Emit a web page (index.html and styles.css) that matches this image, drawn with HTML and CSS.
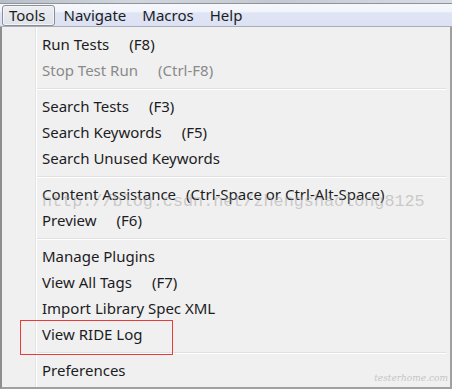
FILE: index.html
```html
<!DOCTYPE html>
<html>
<head>
<meta charset="utf-8">
<link rel="stylesheet" href="styles.css">
</head>
<body>
<div class="screen">
  <div class="topstrip"></div>
  <div class="menubar">
    <span class="mitem active">Tools</span>
    <span class="mitem">Navigate</span>
    <span class="mitem">Macros</span>
    <span class="mitem">Help</span>
  </div>
  <div class="dropdown">
    <div class="row">Run Tests<span class="key">(F8)</span></div>
    <div class="row disabled">Stop Test Run<span class="key">(Ctrl-F8)</span></div>
    <div class="sep"></div>
    <div class="row">Search Tests<span class="key">(F3)</span></div>
    <div class="row">Search Keywords<span class="key">(F5)</span></div>
    <div class="row">Search Unused Keywords</div>
    <div class="sep"></div>
    <div class="row">Content Assistance<span class="key narrow">(Ctrl-Space or Ctrl-Alt-Space)</span></div>
    <div class="row">Preview<span class="key">(F6)</span></div>
    <div class="sep"></div>
    <div class="row">Manage Plugins</div>
    <div class="row">View All Tags<span class="key">(F7)</span></div>
    <div class="row">Import Library Spec XML</div>
    <div class="row">View RIDE Log</div>
    <div class="sep"></div>
    <div class="row">Preferences</div>
  </div>
  <div class="highlight"></div>
  <div class="watermark">http://blog.csdn.net/zhengshaolong8125</div>
  <div class="mark2">testerhome.com</div>
</div>
</body>
</html>
```
FILE: styles.css
```css
* { box-sizing: border-box; }
html, body { margin: 0; padding: 0; }
body {
  width: 452px;
  height: 389px;
  overflow: hidden;
  background: #f0f0f0;
  font-family: "Noto Sans", "Noto Sans CJK SC", sans-serif;
  font-size: 15px;
  color: #1c1c24;
}
.screen {
  position: relative;
  width: 452px;
  height: 389px;
}
.topstrip {
  height: 4px;
  background: linear-gradient(90deg, #b8bec8, #d2d6dc 30%, #c4c9d0 60%, #d8dde3);
  border-bottom: 1px solid #8f949c;
}
.menubar {
  height: 23px;
  display: flex;
  align-items: stretch;
  padding-left: 2px;
  background: linear-gradient(#f6f8fc 0, #f1f4fa 35%, #dfe5f4 40%, #dce2f3 100%);
  border-bottom: 1px solid #a9adb5;
}
.mitem {
  display: flex;
  align-items: center;
  padding: 0 8px 0 8px;
  line-height: 1;
}
.mitem.active {
  border: 1px solid #8a8e96;
  border-radius: 3px;
  background: linear-gradient(#eceef2, #dfe2e8);
  box-shadow: inset 0 0 0 1px #f4f5f7;
  margin-top: 1px;
  padding: 0 8px 0 6px;
  margin-right: 1px;
}
.dropdown {
  height: 362px;
  border-left: 2px solid #8e8e8e;
  border-right: 2px solid #a0a0a0;
  border-bottom: 2px solid #a0a0a0;
  padding-top: 4px;
  background:
    linear-gradient(90deg, transparent 33px, #e2e3e3 33px, #e2e3e3 34px, #ffffff 34px, #ffffff 35px, transparent 35px),
    #f0f0f0;
}
.row {
  height: 26px;
  display: flex;
  align-items: center;
  padding-left: 40px;
  white-space: nowrap;
}
.row.disabled { color: #8a8a8a; }
.key { margin-left: 20px; }
.key.narrow { margin-left: 10px; }
.sep {
  height: 10px;
  margin-left: 35px;
  margin-right: 4px;
  padding-top: 5px;
}
.sep::before {
  content: "";
  display: block;
  border-top: 1px solid #e0e0e0;
  border-bottom: 1px solid #ffffff;
}
.highlight {
  position: absolute;
  left: 20px;
  top: 320px;
  width: 153px;
  height: 35px;
  border: 1px solid #ea3b3b;
}
.watermark {
  position: absolute;
  left: 42px;
  top: 193px;
  font-family: "Liberation Mono", monospace;
  font-size: 16.8px;
  line-height: 18px;
  color: rgba(160, 160, 160, 0.5);
  white-space: nowrap;
  pointer-events: none;
}
.mark2 {
  position: absolute;
  right: 4px;
  bottom: 6px;
  font-family: "DejaVu Serif", serif;
  font-style: italic;
  font-size: 9px;
  color: rgba(150, 150, 150, 0.5);
}
```
